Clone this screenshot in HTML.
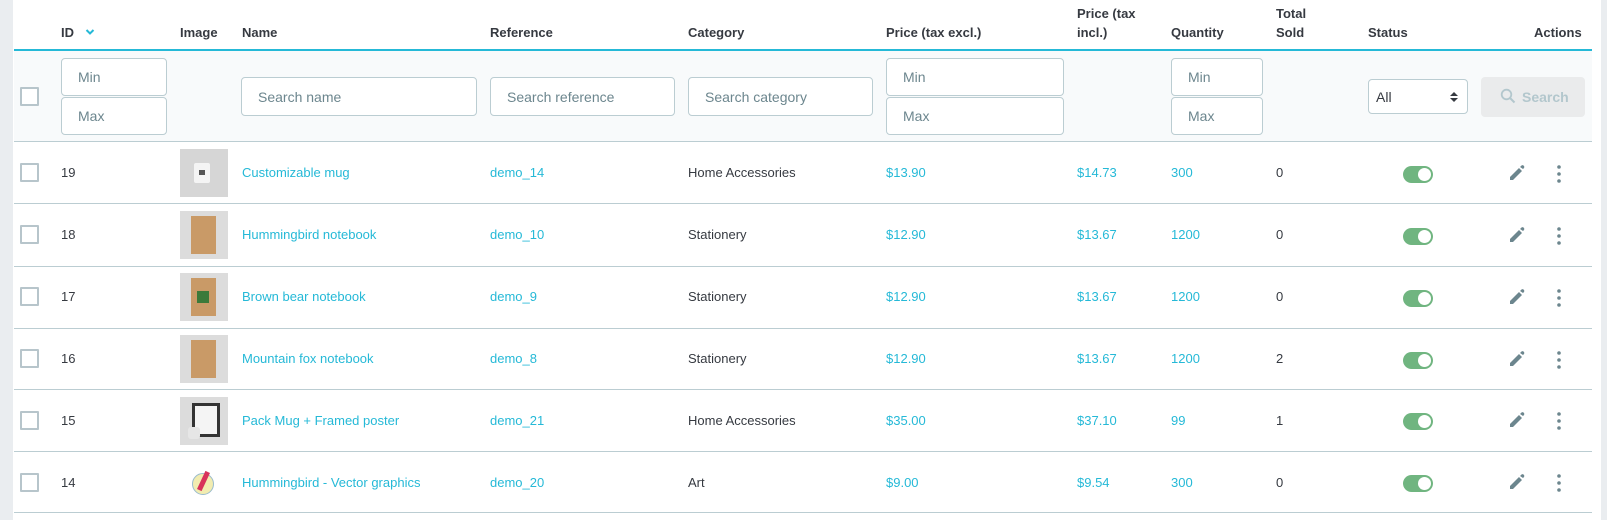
<!DOCTYPE html>
<html><head><meta charset="utf-8"><style>
*{box-sizing:border-box;margin:0;padding:0}
body{width:1607px;height:520px;overflow:hidden;background:#fff;font-family:"Liberation Sans",sans-serif;font-size:13px;color:#363a41;position:relative}
.a{position:absolute;white-space:nowrap}
.h{font-weight:bold;font-size:13px;line-height:19px}
.inp{position:absolute;background:#fff;border:1px solid #bbcdd2;border-radius:4px;color:#6c868e;font-size:14px;padding-left:16px;display:flex;align-items:center}
.cb{position:absolute;left:20px;width:19px;height:19px;border:2px solid #b7c5cb;border-radius:1px;background:#fff}
.ln{position:absolute;left:14px;width:1578px;height:1px;background:#bbcdd2}
.lk{color:#25b9d7}
.t{position:absolute;width:30px;height:17px;border-radius:9px;background:#70b580}
.t:after{content:"";position:absolute;right:2px;top:2px;width:13px;height:13px;border-radius:50%;background:#fff}
.img{position:absolute;left:180px;width:48px;height:48px;background:#dcdcdc}
</style></head><body>
<div class="a" style="left:0;top:0;width:13px;height:520px;background:#eaedf0"></div>
<div class="a" style="left:1601px;top:0;width:6px;height:520px;background:#eaedf0"></div>

<div class="a h" style="left:61px;top:23px">ID</div>
<svg class="a" style="left:85px;top:28px" width="10" height="8"><path d="M1.5 2 L5 5.5 L8.5 2" stroke="#25b9d7" stroke-width="2" fill="none"/></svg>
<div class="a h" style="left:180px;top:23px">Image</div>
<div class="a h" style="left:242px;top:23px">Name</div>
<div class="a h" style="left:490px;top:23px">Reference</div>
<div class="a h" style="left:688px;top:23px">Category</div>
<div class="a h" style="left:886px;top:23px">Price (tax excl.)</div>
<div class="a h" style="left:1077px;top:4px">Price (tax<br>incl.)</div>
<div class="a h" style="left:1171px;top:23px">Quantity</div>
<div class="a h" style="left:1276px;top:4px">Total<br>Sold</div>
<div class="a h" style="left:1368px;top:23px">Status</div>
<div class="a h" style="left:1534px;top:23px">Actions</div>

<div class="a" style="left:14px;top:49px;width:1578px;height:2px;background:#25b9d7"></div>
<div class="a" style="left:14px;top:51px;width:1578px;height:91px;background:#f8fafb"></div>
<div class="cb" style="top:87px"></div>
<div class="inp" style="left:61px;top:58px;width:106px;height:38px">Min</div>
<div class="inp" style="left:61px;top:97px;width:106px;height:38px">Max</div>
<div class="inp" style="left:241px;top:77px;width:236px;height:39px">Search name</div>
<div class="inp" style="left:490px;top:77px;width:185px;height:39px">Search reference</div>
<div class="inp" style="left:688px;top:77px;width:185px;height:39px">Search category</div>
<div class="inp" style="left:886px;top:58px;width:178px;height:38px">Min</div>
<div class="inp" style="left:886px;top:97px;width:178px;height:38px">Max</div>
<div class="inp" style="left:1171px;top:58px;width:92px;height:38px">Min</div>
<div class="inp" style="left:1171px;top:97px;width:92px;height:38px">Max</div>
<div class="inp" style="left:1368px;top:79px;width:100px;height:35px;color:#363a41;padding-left:7px">All<svg style="position:absolute;right:9px;top:11px" width="8" height="12"><path d="M0 5 L4 1 L8 5Z M0 7 L4 11 L8 7Z" fill="#363a41"/></svg></div>
<div class="a" style="left:1481px;top:77px;width:104px;height:40px;background:#eaebec;border-radius:4px;color:#b3c7cd;font-size:14px;font-weight:bold;line-height:40px;padding-left:41px">Search</div>
<svg class="a" style="left:1500px;top:88px" width="16" height="16"><circle cx="6.5" cy="6.5" r="4.8" stroke="#b3c7cd" stroke-width="1.8" fill="none"/><path d="M10 10 L14.5 14.5" stroke="#b3c7cd" stroke-width="2"/></svg>

<div class="ln" style="top:141px"></div>
<div class="ln" style="top:203px"></div>
<div class="ln" style="top:266px"></div>
<div class="ln" style="top:328px"></div>
<div class="ln" style="top:389px"></div>
<div class="ln" style="top:451px"></div>
<div class="ln" style="top:512px"></div>

<!-- rows -->
<div class="cb" style="top:163px"></div><div class="a" style="left:61px;top:165px">19</div>
<div class="img" style="top:149px;background:#d6d6d6"><div style="position:absolute;left:14px;top:14px;width:16px;height:20px;background:#f4f4f4;border-radius:2px"></div><div style="position:absolute;left:19px;top:21px;width:6px;height:5px;background:#555"></div></div>
<div class="a lk" style="left:242px;top:165px">Customizable mug</div><div class="a lk" style="left:490px;top:165px">demo_14</div><div class="a" style="left:688px;top:165px">Home Accessories</div>
<div class="a lk" style="left:886px;top:165px">$13.90</div><div class="a lk" style="left:1077px;top:165px">$14.73</div><div class="a lk" style="left:1171px;top:165px">300</div><div class="a" style="left:1276px;top:165px">0</div>

<div class="cb" style="top:225px"></div><div class="a" style="left:61px;top:227px">18</div>
<div class="img" style="top:211px"><div style="position:absolute;left:11px;top:5px;width:25px;height:38px;background:#c99a67"></div></div>
<div class="a lk" style="left:242px;top:227px">Hummingbird notebook</div><div class="a lk" style="left:490px;top:227px">demo_10</div><div class="a" style="left:688px;top:227px">Stationery</div>
<div class="a lk" style="left:886px;top:227px">$12.90</div><div class="a lk" style="left:1077px;top:227px">$13.67</div><div class="a lk" style="left:1171px;top:227px">1200</div><div class="a" style="left:1276px;top:227px">0</div>

<div class="cb" style="top:287px"></div><div class="a" style="left:61px;top:289px">17</div>
<div class="img" style="top:273px"><div style="position:absolute;left:11px;top:5px;width:25px;height:38px;background:#c99a67"></div><div style="position:absolute;left:17px;top:18px;width:12px;height:12px;background:#3c7a3a"></div></div>
<div class="a lk" style="left:242px;top:289px">Brown bear notebook</div><div class="a lk" style="left:490px;top:289px">demo_9</div><div class="a" style="left:688px;top:289px">Stationery</div>
<div class="a lk" style="left:886px;top:289px">$12.90</div><div class="a lk" style="left:1077px;top:289px">$13.67</div><div class="a lk" style="left:1171px;top:289px">1200</div><div class="a" style="left:1276px;top:289px">0</div>

<div class="cb" style="top:349px"></div><div class="a" style="left:61px;top:351px">16</div>
<div class="img" style="top:335px"><div style="position:absolute;left:11px;top:5px;width:25px;height:38px;background:#c99a67"></div></div>
<div class="a lk" style="left:242px;top:351px">Mountain fox notebook</div><div class="a lk" style="left:490px;top:351px">demo_8</div><div class="a" style="left:688px;top:351px">Stationery</div>
<div class="a lk" style="left:886px;top:351px">$12.90</div><div class="a lk" style="left:1077px;top:351px">$13.67</div><div class="a lk" style="left:1171px;top:351px">1200</div><div class="a" style="left:1276px;top:351px">2</div>

<div class="cb" style="top:411px"></div><div class="a" style="left:61px;top:413px">15</div>
<div class="img" style="top:397px"><div style="position:absolute;left:12px;top:6px;width:28px;height:34px;border:3px solid #333;background:#f4f4f4"></div><div style="position:absolute;left:8px;top:30px;width:12px;height:12px;border-radius:3px;background:#e6e6e6"></div></div>
<div class="a lk" style="left:242px;top:413px">Pack Mug + Framed poster</div><div class="a lk" style="left:490px;top:413px">demo_21</div><div class="a" style="left:688px;top:413px">Home Accessories</div>
<div class="a lk" style="left:886px;top:413px">$35.00</div><div class="a lk" style="left:1077px;top:413px">$37.10</div><div class="a lk" style="left:1171px;top:413px">99</div><div class="a" style="left:1276px;top:413px">1</div>

<div class="cb" style="top:473px"></div><div class="a" style="left:61px;top:475px">14</div>
<div class="img" style="top:459px;background:#fff"><div style="position:absolute;left:12px;top:14px;width:22px;height:22px;border-radius:50%;background:#f2ecb0;border:1px solid #9bc"></div><div style="position:absolute;left:21px;top:12px;width:5px;height:20px;background:#d8325a;transform:rotate(25deg)"></div></div>
<div class="a lk" style="left:242px;top:475px">Hummingbird - Vector graphics</div><div class="a lk" style="left:490px;top:475px">demo_20</div><div class="a" style="left:688px;top:475px">Art</div>
<div class="a lk" style="left:886px;top:475px">$9.00</div><div class="a lk" style="left:1077px;top:475px">$9.54</div><div class="a lk" style="left:1171px;top:475px">300</div><div class="a" style="left:1276px;top:475px">0</div>

<!-- toggles & actions -->
<div class="t" style="left:1403px;top:166px"></div>
<div class="t" style="left:1403px;top:228px"></div>
<div class="t" style="left:1403px;top:290px"></div>
<div class="t" style="left:1403px;top:352px"></div>
<div class="t" style="left:1403px;top:413px"></div>
<div class="t" style="left:1403px;top:475px"></div>

<svg class="a" style="left:1508px;top:0" width="60" height="520" fill="#6c868e">
<g id="r"><path d="M2 180 L2 177 L11 168 L14 171 L5 180Z M12 167 L13.5 165.5 Q14.5 164.8 15.5 165.5 L16 166 Q16.7 167 16 168 L15 169Z"/><circle cx="51" cy="167" r="1.8"/><circle cx="51" cy="174" r="1.8"/><circle cx="51" cy="181" r="1.8"/></g>
<use href="#r" y="62"/><use href="#r" y="124"/><use href="#r" y="186"/><use href="#r" y="247"/><use href="#r" y="309"/>
</svg>
</body></html>
